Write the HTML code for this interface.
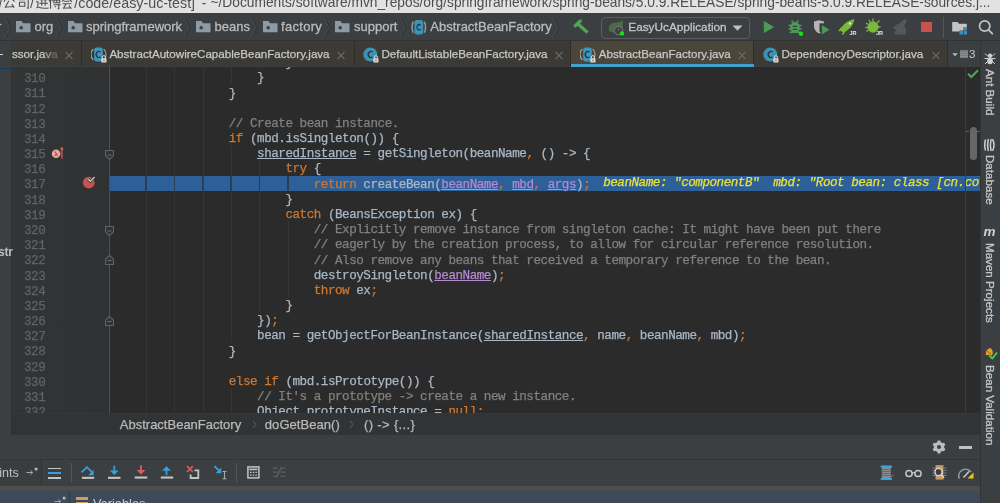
<!DOCTYPE html>
<html><head><meta charset="utf-8">
<style>
*{margin:0;padding:0;box-sizing:border-box}
html,body{width:1000px;height:503px;overflow:hidden;background:#3c3f41;font-family:"Liberation Sans",sans-serif}
.a{position:absolute}
#title{left:0;top:0;width:1000px;height:12.5px;background:#e2e2e2;overflow:hidden;will-change:transform}
#title span{position:absolute;top:-3.8px;line-height:14px;color:#4e4e4e;white-space:nowrap}
#nav{left:0;top:13px;width:1000px;height:28px;background:#3c3f41;border-bottom:1px solid #323232;will-change:transform}
.crumb{position:absolute;top:5.9px;font-size:13px;color:#bbbbbb;white-space:nowrap;-webkit-text-stroke:0.3px}
#tabs{left:0;top:41px;width:1000px;height:26px;background:#3c3f41}
.tab{position:absolute;top:0;height:25px;background:#3b3a34;border-right:1px solid #2d2c28}
.tab .t{position:absolute;top:6px;font-size:11.6px;color:#c8c8c8;white-space:nowrap;-webkit-text-stroke:0.25px}
#editor{left:11px;top:67px;width:969px;height:346px;background:#2b2b2b;overflow:hidden;will-change:transform}
#gutter{left:0;top:0;width:99px;height:346px;background:linear-gradient(90deg,#323436,#313335 40%,#2f3133)}
.ln{position:absolute;-webkit-text-stroke:0.25px;left:13px;font-family:"Liberation Mono",monospace;font-size:12.6px;letter-spacing:-0.47px;color:#606366;line-height:15.18px;white-space:pre}
.code{position:absolute;-webkit-text-stroke:0.25px;font-family:"Liberation Mono",monospace;font-size:12.6px;letter-spacing:-0.47px;color:#a9b7c6;line-height:15.18px;white-space:pre}
.hl{left:99px;width:870px;height:15.5px;background:#2d5f99}
.k{color:#cc7832}
.c{color:#808080}
.u{text-decoration:underline;text-underline-offset:1.3px}
.p{color:#b48ad0}
#crumbs{left:11px;top:413px;width:969px;height:22px;background:#313335;border-top:1px solid #363739}
#dbghead{left:0;top:435px;width:980px;height:25px;background:#3c3f41;border-bottom:1px solid #323232}
#dbgbar{left:0;top:460px;width:980px;height:26px;background:#3c3f41}
#lightband{left:0;top:486px;width:980px;height:5px;background:#4b4d4f}
#vars{left:0;top:491px;width:980px;height:12px;background:#3e4a5a}
#rstrip{left:980px;top:67px;width:20px;height:436px;background:#3c3f41;border-left:1px solid #323232}
#lstrip{left:0;top:67px;width:11px;height:368px;background:#3c3f41}
.guide{width:1px;background:#353535;z-index:1}
.hl{z-index:0}
.code{z-index:2}
#foldline{left:98px;top:0;width:1px;height:346px;background:#4e5052}
.dbgv{font-style:italic;color:#e8e13a}
#tabs{will-change:transform}
.tab.act{background:#4b4639}
.x{position:absolute;top:10.5px;width:8px;height:8px}
.x:before,.x:after{content:"";position:absolute;left:-1px;top:3.5px;width:10px;height:1px;background:#6f6f6f;transform:rotate(45deg)}
.x:after{transform:rotate(-45deg)}
.bc{top:417px;font-size:13px;color:#b9b9b9;white-space:nowrap;-webkit-text-stroke:0.25px}
#bottom{will-change:transform}
.vt{left:997.3px;font-size:11.6px;color:#c6c6c6;-webkit-text-stroke:0.3px;white-space:nowrap;transform-origin:0 0;transform:rotate(90deg)}

</style></head><body>
<div id="title" class="a">
<svg class="a" style="left:0;top:0" width="78" height="13" viewBox="0 0 78 13"><g fill="none" stroke="#505050" stroke-width="1.15" transform="translate(-0.9,-2.3) scale(0.97,1)">
<path d="M3.2 -2L0.2 10.5"/>
<path d="M8 -1L5 4M11 -1L16 4M10 3L6.5 9.5L15 8.8M13 6.5L15.5 10"/>
<path d="M19 -1H30V10.5L28.5 10M20.5 2H27M21 4.5H26.5V8.5H21Z"/>
<path d="M36 -2L32.5 10.5"/>
<path d="M38.5 0.5L40 2M38 4H40V9L38.5 10.5M40.5 9.5Q45 11 51 10.3M42 2H50M41.5 5.5H50.5M44 -1V8M47.5 -1V8"/>
<path d="M53 -1V11M51.5 2L52.5 4M54.5 2L55 3.5M56 0.5H63M59.5 -1V5M56.5 2.5H62.5V5H56.5ZM56 7H63.5M61.5 6V11L60.5 10.5M57.5 8.5L58.5 9.5"/>
<path d="M69.5 -1L65 4M69.5 -1L75 4M67 3.5H72.5M65.5 6H74.5M69 6L66.5 10.5L74 10M72 8L74.5 11"/>
</g></svg>
<span style="left:74.3px;font-size:14.3px">/code/easy-uc-test]</span><span style="left:201.8px;font-size:14px">-</span><span style="left:210.5px;font-size:13.76px">~/Documents/software/mvn_repos/org/springframework/spring-beans/5.0.9.RELEASE/spring-beans-5.0.9.RELEASE-sources.j...</span></div>
<div id="nav" class="a">
<div class="crumb" style="left:-3px">r</div>
<svg class="a" style="left:4.0px;top:4px" width="9" height="21" viewBox="0 0 9 21"><path d="M1 0.5L6 10.5L1 20.5" fill="none" stroke="#505355" stroke-width="0.9"/><path d="M1.9 0.5L6.9 10.5L1.9 20.5" fill="none" stroke="#2c2e30" stroke-width="0.9"/></svg>
<svg class="a" style="left:16px;top:8px" width="15" height="12" viewBox="0 0 15 12"><path d="M0 0H5.5L7 2.2H14.5V11.2H0Z" fill="#8c9ba6"/><circle cx="5.2" cy="6.8" r="1.8" fill="#3c3f41"/></svg>
<div class="crumb" style="left:34.5px">org</div>
<svg class="a" style="left:55.0px;top:4px" width="9" height="21" viewBox="0 0 9 21"><path d="M1 0.5L6 10.5L1 20.5" fill="none" stroke="#505355" stroke-width="0.9"/><path d="M1.9 0.5L6.9 10.5L1.9 20.5" fill="none" stroke="#2c2e30" stroke-width="0.9"/></svg>
<svg class="a" style="left:68px;top:8px" width="15" height="12" viewBox="0 0 15 12"><path d="M0 0H5.5L7 2.2H14.5V11.2H0Z" fill="#8c9ba6"/><circle cx="5.2" cy="6.8" r="1.8" fill="#3c3f41"/></svg>
<div class="crumb" style="left:86px">springframework</div>
<svg class="a" style="left:183.0px;top:4px" width="9" height="21" viewBox="0 0 9 21"><path d="M1 0.5L6 10.5L1 20.5" fill="none" stroke="#505355" stroke-width="0.9"/><path d="M1.9 0.5L6.9 10.5L1.9 20.5" fill="none" stroke="#2c2e30" stroke-width="0.9"/></svg>
<svg class="a" style="left:196px;top:8px" width="15" height="12" viewBox="0 0 15 12"><path d="M0 0H5.5L7 2.2H14.5V11.2H0Z" fill="#8c9ba6"/><circle cx="5.2" cy="6.8" r="1.8" fill="#3c3f41"/></svg>
<div class="crumb" style="left:214.5px">beans</div>
<svg class="a" style="left:250.0px;top:4px" width="9" height="21" viewBox="0 0 9 21"><path d="M1 0.5L6 10.5L1 20.5" fill="none" stroke="#505355" stroke-width="0.9"/><path d="M1.9 0.5L6.9 10.5L1.9 20.5" fill="none" stroke="#2c2e30" stroke-width="0.9"/></svg>
<svg class="a" style="left:262.5px;top:8px" width="15" height="12" viewBox="0 0 15 12"><path d="M0 0H5.5L7 2.2H14.5V11.2H0Z" fill="#8c9ba6"/><circle cx="5.2" cy="6.8" r="1.8" fill="#3c3f41"/></svg>
<div class="crumb" style="left:281px;letter-spacing:0.3px">factory</div>
<svg class="a" style="left:323.0px;top:4px" width="9" height="21" viewBox="0 0 9 21"><path d="M1 0.5L6 10.5L1 20.5" fill="none" stroke="#505355" stroke-width="0.9"/><path d="M1.9 0.5L6.9 10.5L1.9 20.5" fill="none" stroke="#2c2e30" stroke-width="0.9"/></svg>
<svg class="a" style="left:335px;top:8px" width="15" height="12" viewBox="0 0 15 12"><path d="M0 0H5.5L7 2.2H14.5V11.2H0Z" fill="#8c9ba6"/><circle cx="5.2" cy="6.8" r="1.8" fill="#3c3f41"/></svg>
<div class="crumb" style="left:354px">support</div>
<svg class="a" style="left:399.2px;top:4px" width="9" height="21" viewBox="0 0 9 21"><path d="M1 0.5L6 10.5L1 20.5" fill="none" stroke="#505355" stroke-width="0.9"/><path d="M1.9 0.5L6.9 10.5L1.9 20.5" fill="none" stroke="#2c2e30" stroke-width="0.9"/></svg>
<svg class="a" style="left:410px;top:6px" width="17" height="16" viewBox="0 0 17 16"><path d="M3.2 2.6Q0.9 8.2 3.2 13.8" fill="none" stroke="#8e9aa1" stroke-width="1.5"/><path d="M14.4 2.6Q16.7 8.2 14.4 13.8" fill="none" stroke="#8e9aa1" stroke-width="1.5"/><rect x="4.4" y="1" width="8.8" height="14.5" rx="2.5" fill="#3d93b5"/><path d="M10.6 6.2A2.2 2.7 0 1 0 10.6 10.2" fill="none" stroke="#1f3a47" stroke-width="1.3"/></svg>
<div class="crumb" style="left:430.3px">AbstractBeanFactory</div>
<svg class="a" style="left:552.2px;top:4px" width="9" height="21" viewBox="0 0 9 21"><path d="M1 0.5L6 10.5L1 20.5" fill="none" stroke="#505355" stroke-width="0.9"/><path d="M1.9 0.5L6.9 10.5L1.9 20.5" fill="none" stroke="#2c2e30" stroke-width="0.9"/></svg>
<svg class="a" style="left:572px;top:6px" width="18" height="16" viewBox="0 0 18 16"><path d="M2.4 7.8L8.6 1.6" stroke="#4fa557" stroke-width="3.4"/><path d="M9.9 1.3L8.6 1.6" stroke="#4fa557" stroke-width="2.4"/><path d="M6 5L15.6 13.4" stroke="#4fa557" stroke-width="3.3"/></svg>
<div class="a" style="left:601px;top:3.5px;width:149px;height:22px;border:1px solid #5b5e60;border-radius:4px"></div>
<svg class="a" style="left:607px;top:6px" width="20" height="17" viewBox="0 0 20 17"><path d="M2 12C0.5 7 4 3 9 3.5C11.5 3.8 13.5 2.5 15.5 1C16.5 5 16 9 13 12.5C10 14.5 5 14 2 12Z" fill="#4a6b44"/><circle cx="11.5" cy="11.5" r="4.2" fill="#3c3f41" stroke="#6b6e70" stroke-width="1.2"/><path d="M11.5 9V11.5" stroke="#6b6e70" stroke-width="1"/><circle cx="15" cy="14.5" r="2.2" fill="#18e018"/></svg>
<div class="crumb" style="left:628.3px;font-size:11.8px;top:7px;color:#c4c4c4">EasyUcApplication</div>
<svg class="a" style="left:732px;top:12px" width="11" height="6" viewBox="0 0 11 6"><path d="M0.5 0.5H10.5L5.5 5.8Z" fill="#c0c0c0"/></svg>

<svg class="a" style="left:763px;top:7px" width="12" height="13" viewBox="0 0 12 13"><path d="M0.8 1L11.2 7.1L0.8 13.2Z" fill="#499c54"/></svg>
<svg class="a" style="left:787px;top:6px" width="18" height="18" viewBox="0 0 18 18"><path d="M4.5 1.5L6.5 3.8M11.5 1.5L9.5 3.8" stroke="#4e9a5a" stroke-width="1.4"/><ellipse cx="8" cy="8.5" rx="4.8" ry="5.6" fill="#4e9a5a"/><path d="M1.5 6.5H14.5M1.5 10H14.5M2.5 13.2H13.5" stroke="#4e9a5a" stroke-width="1.4"/><path d="M5.8 7.3H10.2M5.8 10.3H10.2" stroke="#3c3f41" stroke-width="1.2"/><circle cx="14" cy="14.8" r="2.2" fill="#16e016"/></svg>
<svg class="a" style="left:813px;top:7px" width="18" height="16" viewBox="0 0 18 16"><path d="M1 1.5L6 0.3L11 1.5V6C11 10 8 12.5 6 13.5C4 12.5 1 10 1 6Z" fill="#b4b4b4"/><path d="M6.5 3.3H11V12H6.5Z" fill="#3c3f41"/><path d="M9 5.3L16.5 9.8L9 14.3Z" fill="#499c54"/></svg>
<svg class="a" style="left:838px;top:5px" width="20" height="18" viewBox="0 0 20 18"><path d="M2 12.5C4.5 7 9 2.5 16.5 1C15.5 7.5 11 12 5.5 14.5Z" fill="#7ab83a"/><path d="M1 13L4 9.5M4.5 16.5L7 12.5" stroke="#7ab83a" stroke-width="1.6"/><circle cx="12" cy="5.5" r="1.2" fill="#e8e8e8"/><text x="11.4" y="17" font-family="Liberation Sans" font-size="5.6" font-weight="bold" fill="#e2e2e2">JR</text></svg>
<svg class="a" style="left:864px;top:5px" width="20" height="18" viewBox="0 0 20 18"><ellipse cx="9" cy="9" rx="5.5" ry="5.8" fill="#7ab83a"/><path d="M2 5L4.5 6.5M1.5 9.5H4M2.5 13.5L5 11.5M9 0.5V3M15.5 2.5L13 5M16.5 9H14M5 2L6.5 4.5" stroke="#7ab83a" stroke-width="1.3"/><text x="12" y="17" font-family="Liberation Sans" font-size="5.6" font-weight="bold" fill="#e2e2e2">JR</text></svg>
<svg class="a" style="left:891px;top:5px" width="18" height="18" viewBox="0 0 18 18"><path d="M2 10C3 8 6 6.5 8.5 5.5C11 3 13 1 15 0.8C16 3 15 6 13 8C15 10 15.5 13 15 16.5H3.5C3.5 14.5 4 13 5.5 12C4 11.5 2.5 11 2 10Z" fill="#565656"/></svg>
<div class="a" style="left:921px;top:9px;width:10.5px;height:10.2px;background:#c9524f"></div>
<div class="a" style="left:942.5px;top:4px;width:1px;height:20.5px;background:#545658"></div>
<svg class="a" style="left:952px;top:8px" width="16" height="14" viewBox="0 0 16 14"><path d="M0.2 1H5.5L7 2.8H14.8V6H11.5V9.5H7.5V10.5H0.2Z" fill="#c4c4c4"/><rect x="11.6" y="6" width="3.4" height="3.6" rx="0.6" fill="#3592c4"/><rect x="7.5" y="10" width="3.4" height="3.6" rx="0.6" fill="#3592c4"/><rect x="11.6" y="10" width="3.4" height="3.6" rx="0.6" fill="#3592c4"/></svg>
<svg class="a" style="left:978px;top:6px" width="17" height="17" viewBox="0 0 17 17"><circle cx="6.7" cy="7" r="5.2" fill="none" stroke="#c2c2c2" stroke-width="1.7"/><path d="M10.5 10.8L14.3 14.6" stroke="#c2c2c2" stroke-width="1.9" stroke-linecap="round"/></svg>

</div>
<div id="tabs" class="a">
<div class="a" style="left:0;top:0;width:11px;height:25px;background:#3c3f41"></div>
<div class="a" style="left:0;top:12.5px;width:3px;height:1.5px;background:#d0d0d0"></div>
<div class="tab" style="left:11px;width:71px"><div class="t" style="left:1px">ssor.ja<span style="color:#9a9a98">v</span><span style="color:#6f6e6a">a</span></div><div class="x" style="left:54.3px"></div></div>
<div class="tab" style="left:82px;width:273px"><svg class="a" style="left:9.0px;top:6px" width="16" height="16" viewBox="0 0 16 16"><path d="M2.3 2.2A7.2 7.2 0 0 0 2.3 12.8" fill="none" stroke="#a4acb1" stroke-width="1.1"/><path d="M12.7 2.2A7.2 7.2 0 0 1 12.7 12.8" fill="none" stroke="#a4acb1" stroke-width="1.1"/><rect x="3.2" y="0.4" width="8.6" height="14.2" rx="2.4" fill="#3e96b8"/><path d="M9.6 5A2.8 3 0 1 0 9.6 10" fill="none" stroke="#1f3b4a" stroke-width="1.4"/><rect x="10.3" y="11.3" width="5.2" height="4.3" rx="0.5" fill="#d6d6d6"/><path d="M11.3 11.5V10.2A1.6 1.6 0 0 1 14.5 10.2V11.5" fill="none" stroke="#d6d6d6" stroke-width="1"/><rect x="12.5" y="12.8" width="0.9" height="1.4" fill="#555"/></svg><div class="t" style="left:27.4px">AbstractAutowireCapableBeanFactory.java</div><div class="x" style="left:255px"></div></div>
<div class="tab" style="left:355px;width:216px"><svg class="a" style="left:7.6px;top:6px" width="16" height="16" viewBox="0 0 16 16"><circle cx="7.3" cy="7.5" r="7" fill="#3e91b3"/><path d="M9.6 5A2.8 3 0 1 0 9.6 10" fill="none" stroke="#1f3b4a" stroke-width="1.4"/><rect x="10.3" y="11.3" width="5.2" height="4.3" rx="0.5" fill="#d6d6d6"/><path d="M11.3 11.5V10.2A1.6 1.6 0 0 1 14.5 10.2V11.5" fill="none" stroke="#d6d6d6" stroke-width="1"/><rect x="12.5" y="12.8" width="0.9" height="1.4" fill="#555"/></svg><div class="t" style="left:26.5px">DefaultListableBeanFactory.java</div><div class="x" style="left:199.5px"></div></div>
<div class="tab act" style="left:571px;width:183px"><svg class="a" style="left:9.4px;top:6px" width="16" height="16" viewBox="0 0 16 16"><path d="M2.3 2.2A7.2 7.2 0 0 0 2.3 12.8" fill="none" stroke="#a4acb1" stroke-width="1.1"/><path d="M12.7 2.2A7.2 7.2 0 0 1 12.7 12.8" fill="none" stroke="#a4acb1" stroke-width="1.1"/><rect x="3.2" y="0.4" width="8.6" height="14.2" rx="2.4" fill="#3e96b8"/><path d="M9.6 5A2.8 3 0 1 0 9.6 10" fill="none" stroke="#1f3b4a" stroke-width="1.4"/><rect x="10.3" y="11.3" width="5.2" height="4.3" rx="0.5" fill="#d6d6d6"/><path d="M11.3 11.5V10.2A1.6 1.6 0 0 1 14.5 10.2V11.5" fill="none" stroke="#d6d6d6" stroke-width="1"/><rect x="12.5" y="12.8" width="0.9" height="1.4" fill="#555"/></svg><div class="t" style="left:27.8px">AbstractBeanFactory.java</div><div class="x" style="left:167px"></div><div class="a" style="left:0;top:22.5px;width:182.5px;height:3px;background:#3ea2ca"></div></div>
<div class="tab" style="left:754px;width:194px"><svg class="a" style="left:9.0px;top:6px" width="16" height="16" viewBox="0 0 16 16"><circle cx="7.3" cy="7.5" r="7" fill="#3e91b3"/><path d="M9.6 5A2.8 3 0 1 0 9.6 10" fill="none" stroke="#1f3b4a" stroke-width="1.4"/><rect x="10.3" y="11.3" width="5.2" height="4.3" rx="0.5" fill="#d6d6d6"/><path d="M11.3 11.5V10.2A1.6 1.6 0 0 1 14.5 10.2V11.5" fill="none" stroke="#d6d6d6" stroke-width="1"/><rect x="12.5" y="12.8" width="0.9" height="1.4" fill="#555"/></svg><div class="t" style="left:27.5px">DependencyDescriptor.java</div><div class="x" style="left:177.5px"></div></div>
<svg class="a" style="left:952px;top:12px" width="6" height="4" viewBox="0 0 6 4"><path d="M0.3 0.3H5.7L3 3.3Z" fill="#bdbdbd"/></svg>
<div class="a" style="left:959.5px;top:9px;width:8.2px;height:8.2px;background:#7b7b7b"></div>
<div class="a" style="left:959.5px;top:11px;width:8.2px;height:0.6px;background:#8b8b8b"></div>
<div class="a" style="left:959.5px;top:13px;width:8.2px;height:0.6px;background:#8b8b8b"></div>
<div class="a" style="left:959.5px;top:15px;width:8.2px;height:0.6px;background:#8b8b8b"></div>
<div class="a" style="left:969px;top:6.5px;font-size:11.5px;color:#c8c8c8">3</div>

</div>
<div id="lstrip" class="a"></div>
<div id="editor" class="a">
  <div id="gutter" class="a"></div><div id="foldline" class="a"></div>
<div class="ln" style="top:-9.98px">309</div>
<div class="a guide" style="left:134.96px;top:-12.94px;height:364.32px"></div>
<div class="a guide" style="left:163.32px;top:-12.94px;height:364.32px"></div>
<div class="a guide" style="left:191.68px;top:-12.94px;height:364.32px"></div>
<div class="a guide" style="left:220.04px;top:-12.94px;height:30.36px"></div>
<div class="a guide" style="left:220.04px;top:78.14px;height:197.34px"></div>
<div class="a guide" style="left:220.04px;top:321.02px;height:30.36px"></div>
<div class="a guide" style="left:248.40px;top:-12.94px;height:15.18px"></div>
<div class="a guide" style="left:248.40px;top:93.32px;height:151.80px"></div>
<div class="a guide" style="left:276.76px;top:108.50px;height:15.18px"></div>
<div class="a guide" style="left:276.76px;top:154.04px;height:75.90px"></div>
<div class="code" style="top:-10.78px;left:104.30px">                        }</div>
<div class="ln" style="top:5.20px">310</div>
<div class="code" style="top:4.40px;left:104.30px">                    }</div>
<div class="ln" style="top:20.38px">311</div>
<div class="code" style="top:19.58px;left:104.30px">                }</div>
<div class="ln" style="top:35.56px">312</div>
<div class="code" style="top:34.76px;left:104.30px"></div>
<div class="ln" style="top:50.74px">313</div>
<div class="code" style="top:49.94px;left:104.30px">                <span class="c">// Create bean instance.</span></div>
<div class="ln" style="top:65.92px">314</div>
<div class="code" style="top:65.12px;left:104.30px">                <span class="k">if</span> (mbd.isSingleton()) {</div>
<div class="ln" style="top:81.10px">315</div>
<div class="code" style="top:80.30px;left:104.30px">                    <span class="u">sharedInstance</span> = getSingleton(beanName<span class="k">,</span> () -&gt; {</div>
<div class="ln" style="top:96.28px">316</div>
<div class="code" style="top:95.48px;left:104.30px">                        <span class="k">try</span> {</div>
<div class="a hl" style="top:108.50px"></div>
<div class="ln" style="top:111.46px">317</div>
<div class="code" style="top:110.66px;left:104.30px">                            <span class="k">return</span> createBean(<span class="p u">beanName</span><span class="k">,</span> <span class="p u">mbd</span><span class="k">,</span> <span class="p u">args</span>)<span class="k">;</span></div>
<div class="ln" style="top:126.64px">318</div>
<div class="code" style="top:125.84px;left:104.30px">                        }</div>
<div class="ln" style="top:141.82px">319</div>
<div class="code" style="top:141.02px;left:104.30px">                        <span class="k">catch</span> (BeansException ex) {</div>
<div class="ln" style="top:157.00px">320</div>
<div class="code" style="top:156.20px;left:104.30px">                            <span class="c">// Explicitly remove instance from singleton cache: It might have been put there</span></div>
<div class="ln" style="top:172.18px">321</div>
<div class="code" style="top:171.38px;left:104.30px">                            <span class="c">// eagerly by the creation process, to allow for circular reference resolution.</span></div>
<div class="ln" style="top:187.36px">322</div>
<div class="code" style="top:186.56px;left:104.30px">                            <span class="c">// Also remove any beans that received a temporary reference to the bean.</span></div>
<div class="ln" style="top:202.54px">323</div>
<div class="code" style="top:201.74px;left:104.30px">                            destroySingleton(<span class="p u">beanName</span>)<span class="k">;</span></div>
<div class="ln" style="top:217.72px">324</div>
<div class="code" style="top:216.92px;left:104.30px">                            <span class="k">throw</span> ex<span class="k">;</span></div>
<div class="ln" style="top:232.90px">325</div>
<div class="code" style="top:232.10px;left:104.30px">                        }</div>
<div class="ln" style="top:248.08px">326</div>
<div class="code" style="top:247.28px;left:104.30px">                    })<span class="k">;</span></div>
<div class="ln" style="top:263.26px">327</div>
<div class="code" style="top:262.46px;left:104.30px">                    bean = getObjectForBeanInstance(<span class="u">sharedInstance</span><span class="k">,</span> name<span class="k">,</span> beanName<span class="k">,</span> mbd)<span class="k">;</span></div>
<div class="ln" style="top:278.44px">328</div>
<div class="code" style="top:277.64px;left:104.30px">                }</div>
<div class="ln" style="top:293.62px">329</div>
<div class="code" style="top:292.82px;left:104.30px"></div>
<div class="ln" style="top:308.80px">330</div>
<div class="code" style="top:308.00px;left:104.30px">                <span class="k">else if</span> (mbd.isPrototype()) {</div>
<div class="ln" style="top:323.98px">331</div>
<div class="code" style="top:323.18px;left:104.30px">                    <span class="c">// It's a prototype -&gt; create a new instance.</span></div>
<div class="ln" style="top:339.16px">332</div>
<div class="code" style="top:338.36px;left:104.30px">                    Object prototypeInstance = <span class="k">null</span><span class="k">;</span></div>
<svg class="a" style="left:94px;top:83.23px" width="9" height="11" viewBox="0 0 9 11"><path d="M0.5 0.5H8.5V6L4.5 9.5L0.5 6Z" fill="#313335" stroke="#606264" stroke-width="1.1"/><path d="M2.5 5H6.5" stroke="#6a6c6e" stroke-width="1"/></svg>
<svg class="a" style="left:94px;top:159.13px" width="9" height="11" viewBox="0 0 9 11"><path d="M0.5 0.5H8.5V6L4.5 9.5L0.5 6Z" fill="#313335" stroke="#606264" stroke-width="1.1"/><path d="M2.5 5H6.5" stroke="#6a6c6e" stroke-width="1"/></svg>
<svg class="a" style="left:94px;top:186.99px" width="9" height="11" viewBox="0 0 9 11"><path d="M0.5 10.5H8.5V5L4.5 1.5L0.5 5Z" fill="#313335" stroke="#606264" stroke-width="1.1"/><path d="M2.5 6.5H6.5" stroke="#6a6c6e" stroke-width="1"/></svg>
<svg class="a" style="left:94px;top:247.71px" width="9" height="11" viewBox="0 0 9 11"><path d="M0.5 10.5H8.5V5L4.5 1.5L0.5 5Z" fill="#313335" stroke="#606264" stroke-width="1.1"/><path d="M2.5 6.5H6.5" stroke="#6a6c6e" stroke-width="1"/></svg>
<div class="a" style="left:134.36px;top:108.50px;width:1.6px;height:15.5px;background:#2a3e57;z-index:1"></div>
<div class="a" style="left:162.72px;top:108.50px;width:1.6px;height:15.5px;background:#2a3e57;z-index:1"></div>
<div class="a" style="left:191.08px;top:108.50px;width:1.6px;height:15.5px;background:#2a3e57;z-index:1"></div>
<div class="a" style="left:219.44px;top:108.50px;width:1.6px;height:15.5px;background:#2a3e57;z-index:1"></div>
<div class="a" style="left:247.80px;top:108.50px;width:1.6px;height:15.5px;background:#2a3e57;z-index:1"></div>
<div class="a" style="left:276.16px;top:108.50px;width:1.6px;height:15.5px;background:#2a3e57;z-index:1"></div>
<div class="code dbgv" style="top:109.10px;left:592.20px">beanName: "componentB"  mbd: "Root bean: class [cn.co</div>
</div>
<div id="crumbs" class="a"></div>
<div id="dbghead" class="a"></div>
<div id="dbgbar" class="a"></div>
<div id="lightband" class="a"></div>
<div id="vars" class="a"></div>
<div id="rstrip" class="a"></div>
<div id="bottom" class="a" style="left:0;top:0;width:1000px;height:503px">
<div class="a" style="left:0;top:67px;width:11px;height:368px;background:#3c3f41"></div>
<div class="a" style="left:0;top:67.5px;width:11px;height:1.6px;background:#113a5c"></div>
<div class="a" style="left:-2px;top:245px;font-size:12px;font-weight:bold;color:#bdbdbd;letter-spacing:-0.2px">str</div>
<!-- editor bottom crumbs -->
<div class="a bc" style="left:119.8px">AbstractBeanFactory</div>
<svg class="a" style="left:251.5px;top:420px" width="5" height="9" viewBox="0 0 5 9"><path d="M1 1L4 4.5L1 8" fill="none" stroke="#626466" stroke-width="1"/></svg>
<div class="a bc" style="left:264.8px;letter-spacing:0.06px">doGetBean()</div>
<svg class="a" style="left:349px;top:420px" width="5" height="9" viewBox="0 0 5 9"><path d="M1 1L4 4.5L1 8" fill="none" stroke="#626466" stroke-width="1"/></svg>
<div class="a bc" style="left:364px;letter-spacing:0.35px">() -&gt; {...}</div>
<!-- debug header icons -->
<svg class="a" style="left:932.3px;top:440.3px" width="14" height="14" viewBox="0 0 14 14"><path fill="#bcbcbc" fill-rule="evenodd" d="M5.19 2.13L5.81 0.41L8.19 0.41L8.81 2.13L10.31 2.99L12.12 2.68L13.30 4.73L12.13 6.13L12.13 7.87L13.30 9.27L12.12 11.32L10.31 11.01L8.81 11.87L8.19 13.59L5.81 13.59L5.19 11.87L3.69 11.01L1.88 11.32L0.70 9.27L1.87 7.87L1.87 6.13L0.70 4.73L1.88 2.68L3.69 2.99ZM7 5A2 2 0 1 0 7 9A2 2 0 1 0 7 5Z"/></svg>
<div class="a" style="left:959.3px;top:446.3px;width:12.5px;height:2.3px;background:#c0c0c0"></div>
<div class="a" style="left:0;top:459.2px;width:980px;height:1px;background:#333537"></div>
<!-- toolbar -->
<div class="a" style="left:0;top:460.2px;width:41px;height:26px;background:#3a3c3e"></div>
<div class="a" style="left:41px;top:460.2px;width:1px;height:26px;background:#313335"></div>
<div class="a" style="left:-0.8px;top:466px;font-size:12.6px;color:#bfbfbf">ints</div>
<svg class="a" style="left:26px;top:467px" width="13" height="9" viewBox="0 0 13 9"><path d="M0.5 5.5H6.5M4.5 3.3L6.8 5.5L4.5 7.7" fill="none" stroke="#a8a8a8" stroke-width="1"/><rect x="8.8" y="0.8" width="2.6" height="2.6" fill="#bdbdbd"/></svg>
<div class="a" style="left:48.4px;top:467.6px;width:12.4px;height:1.7px;background:#c4c4c4"></div>
<div class="a" style="left:48.4px;top:472.1px;width:12.4px;height:2.1px;background:#3a9fd8"></div>
<div class="a" style="left:48.4px;top:477px;width:12.4px;height:1.7px;background:#c4c4c4"></div>
<div class="a" style="left:71.2px;top:463px;width:1px;height:20px;background:#525456"></div>
<svg class="a" style="left:80px;top:465px" width="16" height="15" viewBox="0 0 16 15"><path d="M1.6 7.4L7 2.2L11.6 6.8" fill="none" stroke="#3a9fd8" stroke-width="1.7"/><path d="M13.6 4.8V10.2H8.2Z" fill="#3a9fd8"/><rect x="1.9" y="11.8" width="12.3" height="2.1" fill="#c4c4c4"/></svg>
<svg class="a" style="left:107px;top:465px" width="15" height="15" viewBox="0 0 15 15"><path d="M7.3 0.7V6" stroke="#3a9fd8" stroke-width="1.8"/><path d="M2.9 5.5H11.7L7.3 10Z" fill="#3a9fd8"/><rect x="1" y="11.8" width="12.5" height="2.1" fill="#c4c4c4"/></svg>
<svg class="a" style="left:133.5px;top:465px" width="15" height="15" viewBox="0 0 15 15"><path d="M7 0.3V5.5" stroke="#db5c5c" stroke-width="1.8"/><path d="M2.6 5H11.4L7 9.5Z" fill="#db5c5c"/><rect x="0.7" y="11.5" width="12.6" height="2.1" fill="#c4c4c4"/></svg>
<svg class="a" style="left:160px;top:465px" width="15" height="15" viewBox="0 0 15 15"><path d="M6.5 4.5V10.2" stroke="#3a9fd8" stroke-width="1.8"/><path d="M2.1 5.8H10.9L6.5 1.2Z" fill="#3a9fd8"/><rect x="0.8" y="11.5" width="12.4" height="2.1" fill="#c4c4c4"/></svg>
<svg class="a" style="left:186px;top:465px" width="15" height="15" viewBox="0 0 15 15"><path d="M1 1.2L6.8 7M6.8 1.2L1 7" stroke="#db5c5c" stroke-width="1.7"/><path d="M8.5 5.3H12.3V13H4.6V9.5" fill="none" stroke="#c4c4c4" stroke-width="1.8"/></svg>
<svg class="a" style="left:212.5px;top:465px" width="16" height="16" viewBox="0 0 16 16"><path d="M1.5 1.2L6.5 6.2" stroke="#3a9fd8" stroke-width="1.7"/><path d="M8.2 2.5V8.2H2.5Z" fill="#3a9fd8"/><path d="M9.5 6.5H13.5M11.5 6.5V13.8M9.5 13.8H13.5" fill="none" stroke="#a9a9a9" stroke-width="1.1"/></svg>
<div class="a" style="left:236px;top:462.5px;width:1px;height:20.5px;background:#525456"></div>
<svg class="a" style="left:246.5px;top:466px" width="13" height="13" viewBox="0 0 13 13"><rect x="0.9" y="0.9" width="11" height="11" fill="none" stroke="#c4c4c4" stroke-width="1.5"/><rect x="2.3" y="2.6" width="8.2" height="1.6" fill="#c4c4c4"/><path d="M3 6.3H4.5M5.7 6.3H7.2M8.4 6.3H9.9M3 9.2H4.5M5.7 9.2H7.2M8.4 9.2H9.9" stroke="#c4c4c4" stroke-width="1.3"/></svg>
<svg class="a" style="left:272.5px;top:466px" width="13" height="13" viewBox="0 0 13 13"><path d="M0 2.2H4.5M7.5 2.2H12.5M0 6.2H4.5M7.5 6.2H12.5M0 10.2H4.5M7.5 10.2H12.5M3.5 11.5L8.5 1" fill="none" stroke="#5d5f61" stroke-width="1.3"/></svg>
<!-- right toolbar icons -->
<svg class="a" style="left:880px;top:465px" width="14" height="16" viewBox="0 0 14 16"><rect x="1.8" y="2" width="9" height="11.6" fill="#8a8c8e"/><path d="M1.8 4.5H10.8M1.8 6.5H10.8M1.8 8.5H10.8M1.8 10.5H10.8" stroke="#5d5f61" stroke-width="0.8"/><rect x="0.5" y="0.5" width="11.6" height="2" rx="1" fill="#3aa5dc"/><rect x="0.5" y="13.1" width="11.6" height="2" rx="1" fill="#3aa5dc"/><path d="M11 11.5C12.5 11.5 13 10.5 12.8 9.5" fill="none" stroke="#8a8c8e" stroke-width="0.8"/></svg>
<svg class="a" style="left:904.5px;top:468.5px" width="17" height="9" viewBox="0 0 17 9"><circle cx="4" cy="4.5" r="3.1" fill="none" stroke="#c4c4c4" stroke-width="1.5"/><circle cx="13" cy="4.5" r="3.1" fill="none" stroke="#c4c4c4" stroke-width="1.5"/><path d="M7 3.8H10" stroke="#c4c4c4" stroke-width="1.3"/></svg>
<svg class="a" style="left:931.5px;top:465px" width="15" height="15" viewBox="0 0 15 15"><rect x="3.5" y="0.2" width="8" height="14.4" fill="#c99a5c"/><path d="M0.5 3H3M0.5 5.5H3M0.5 8H3M0.5 10.5H3M12 3H14.5M12 5.5H14.5M12 8H14.5M12 10.5H14.5" stroke="#8d8f91" stroke-width="0.8"/><circle cx="6.5" cy="7" r="3.6" fill="#3c3f41" stroke="#d8d8d8" stroke-width="1.4"/><path d="M9 9.5L12 12.8" stroke="#d8d8d8" stroke-width="1.6"/></svg>
<svg class="a" style="left:958px;top:466px" width="16" height="13" viewBox="0 0 16 13"><path d="M1.2 12.5A6.8 6.8 0 0 1 13 6" fill="none" stroke="#8fa3b0" stroke-width="1.6"/><path d="M5.5 11.5L11 5.5" stroke="#c8c8c8" stroke-width="1.6"/><path d="M15.5 6.5V12.5H9.5Z" fill="#f0c419"/></svg>
<!-- variables bar -->
<div class="a" style="left:69.2px;top:491px;width:1px;height:12px;background:#323c48"></div>
<svg class="a" style="left:54px;top:496px" width="14" height="8" viewBox="0 0 14 8"><path d="M0.5 5.5H6.5M4.5 3.3L6.8 5.5L4.5 7.7" fill="none" stroke="#9aa4b0" stroke-width="1"/><rect x="8.8" y="0.8" width="2.6" height="2.6" fill="#b5bcc4"/></svg>
<div class="a" style="left:76px;top:497px;width:12px;height:3px;background:#d09d5c"></div>
<div class="a" style="left:76px;top:501.5px;width:12px;height:3px;background:#d09d5c"></div>
<div class="a" style="left:93px;top:496px;font-size:12.8px;color:#c6cbd1">Variables</div>

<!-- editor right: scrollbar divider, check, thumb -->
<div class="a" style="left:965.3px;top:67px;width:1px;height:346px;background:#3b3c3d"></div>
<svg class="a" style="left:966.5px;top:68.5px" width="12" height="10" viewBox="0 0 12 10"><path d="M1 4.8L4.3 8L11 1.2" fill="none" stroke="#52a55a" stroke-width="2"/></svg>
<div class="a" style="left:969.6px;top:126.8px;width:7.2px;height:33px;border-radius:3.6px;background:#646668"></div>
<div class="a" style="left:966px;top:130.5px;width:2.5px;height:1px;background:#8a5a3a"></div>
<div class="a" style="left:977px;top:130.5px;width:2.5px;height:1px;background:#8a5a3a"></div>
<!-- right strip -->
<div class="a" style="left:980px;top:41px;width:1px;height:462px;background:#323435"></div>
<svg class="a" style="left:984px;top:51.5px" width="12" height="13" viewBox="0 0 12 13"><ellipse cx="6" cy="3.8" rx="2.2" ry="2.3" fill="#d0d0d0"/><ellipse cx="6" cy="9" rx="2.8" ry="3.2" fill="#d0d0d0"/><path d="M1 1.5L4 4.5M11 1.5L8 4.5M0.5 6.5H4M11.5 6.5H8M1 12L4 9M11 12L8 9" stroke="#d0d0d0" stroke-width="1"/></svg>
<div class="a vt" style="top:69.3px;letter-spacing:0px">Ant Build</div>
<svg class="a" style="left:984px;top:137.5px" width="12" height="14" viewBox="0 0 12 14"><g fill="none" stroke="#cfcfcf" stroke-width="1.5"><path d="M1.5 1.5Q0 7 1.5 12.5"/><path d="M4.3 1Q2.8 7 4.3 13"/><path d="M7.1 1Q5.6 7 7.1 13"/><path d="M8.5 1.2Q11.5 7 8.5 12.8"/></g></svg>
<div class="a vt" style="top:155.2px;letter-spacing:0px">Database</div>
<div class="a" style="left:983.5px;top:223.5px;font-size:13.5px;font-style:italic;font-weight:bold;color:#cfcfcf">m</div>
<div class="a vt" style="top:243.2px;letter-spacing:0px">Maven Projects</div>
<svg class="a" style="left:984px;top:346.5px" width="14" height="13" viewBox="0 0 14 13"><path d="M2 8C1 5 3 1.5 6.5 1C9 3 9.5 6 8 8.5Z" fill="#e29b2c"/><path d="M3 4L7 7" stroke="#8a5a1e" stroke-width="0.8"/><path d="M5.5 8.8L8.3 11.5L13 5.5" fill="none" stroke="#3fd84a" stroke-width="1.8"/></svg>
<div class="a vt" style="top:364.6px;letter-spacing:0px">Bean Validation</div>

<!-- gutter icons -->
<svg class="a" style="left:51.2px;top:144.8px" width="13" height="14" viewBox="0 0 13 14"><circle cx="5.1" cy="8.7" r="4.3" fill="#f0a49c"/><path d="M4 6.4L6.6 11.2M5.3 8.8L3.6 11.2" stroke="#5c4444" stroke-width="0.85" fill="none"/><path d="M10.9 13.8V3.5" stroke="#d9584f" stroke-width="1.4"/><path d="M8.6 4.6L10.9 1.6L13 4.6Z" fill="#d9584f"/></svg>
<svg class="a" style="left:82px;top:175px" width="14" height="14" viewBox="0 0 14 14"><circle cx="6.8" cy="7.6" r="5.9" fill="#c9524f"/><path d="M6 4L8.4 6.3L12.6 2" fill="none" stroke="#2f3133" stroke-width="2.6"/><path d="M6 4L8.4 6.3L12.6 2" fill="none" stroke="#c4c4c4" stroke-width="1.4"/></svg>

</div>

</body></html>
